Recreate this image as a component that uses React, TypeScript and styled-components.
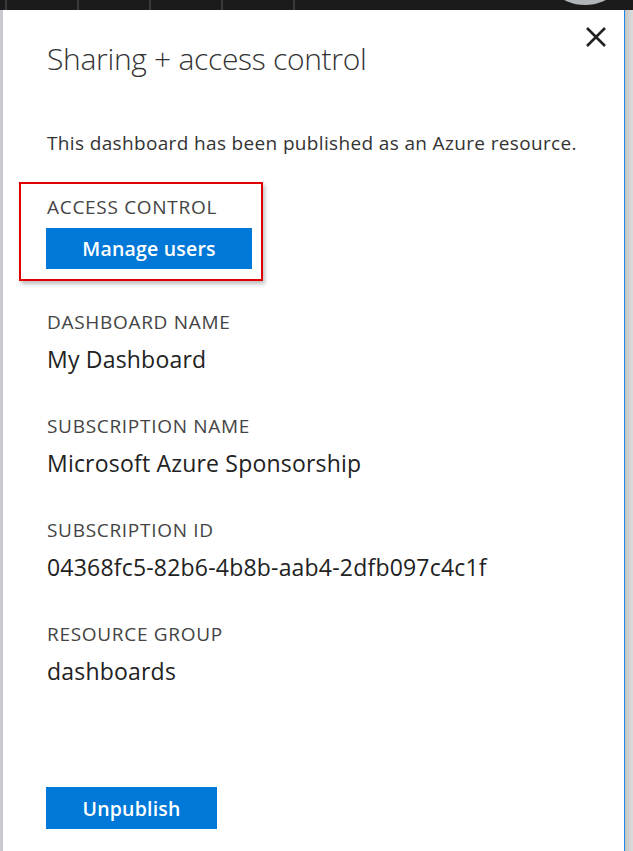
import * as React from 'react';
import styled, { createGlobalStyle } from 'styled-components';

const GlobalStyle = createGlobalStyle`
  html, body {
    margin: 0;
    padding: 0;
    background: #fff;
  }
  body {
    font-family: "Open Sans", "Noto Sans", sans-serif;
    color: #222;
  }
`;

const Page = styled.div`
  width: 633px;
  height: 851px;
  display: flex;
  flex-direction: column;
  overflow: hidden;
`;

const TopBar = styled.div`
  height: 10px;
  flex-shrink: 0;
  background: #1b1b1b;
  display: flex;
  align-items: flex-end;
  padding-left: 5px;
  overflow: hidden;
`;

const Tab = styled.div`
  width: 70px;
  height: 10px;
  flex-shrink: 0;
  border-left: 2px solid #3a3a3a;
`;

const Avatar = styled.div`
  width: 92px;
  height: 92px;
  border-radius: 50%;
  background: #b1b5ba;
  margin-left: auto;
  margin-right: 2px;
  margin-bottom: 5px;
  flex-shrink: 0;
`;

const Body = styled.div`
  flex: 1;
  display: flex;
`;

const LeftEdge = styled.div`
  width: 3px;
  background: #c9c9d1;
`;

const RightEdge = styled.div`
  width: 8px;
  background: linear-gradient(to right, #c4c4c4, #dcdcdc);
`;

const Panel = styled.div`
  flex: 1;
  background: #fff;
  border-right: 1px solid #1e88e5;
  padding: 0 0 0 44px;
  display: flex;
  flex-direction: column;
`;

const Header = styled.div`
  display: flex;
  justify-content: space-between;
  align-items: flex-start;
  padding-top: 31px;
`;

const Title = styled.h1`
  margin: 0;
  font-weight: 300;
  font-size: 30px;
  line-height: 36px;
  color: #333;
  letter-spacing: -0.3px;
`;

const CloseButton = styled.button`
  border: none;
  background: none;
  padding: 0;
  margin: -16px 16px 0 0;
  width: 24px;
  height: 24px;
  cursor: pointer;
`;

const Description = styled.p`
  margin: 54px 0 0;
  font-size: 19px;
  line-height: 24px;
  color: #333;
  letter-spacing: 0.35px;
`;

const Highlight = styled.div`
  margin: 27px 0 0 -28px;
  width: 214px;
  padding: 11px 0 10px 26px;
  border: 2px solid #e00000;
  box-shadow: 2px 3px 4px rgba(0, 0, 0, 0.25);
`;

const Field = styled.div<{ $gap?: number }>`
  margin-top: ${(p) => p.$gap ?? 0}px;
  display: flex;
  flex-direction: column;
`;

const Label = styled.div`
  font-size: 19px;
  line-height: 24px;
  text-transform: uppercase;
  color: #444;
  letter-spacing: 0.7px;
`;

const Value = styled.div`
  margin-top: 11px;
  font-size: 23px;
  line-height: 28px;
  color: #222;
  letter-spacing: 0.2px;
`;

const PrimaryButton = styled.button<{ $width: number; $height: number }>`
  width: ${(p) => p.$width}px;
  height: ${(p) => p.$height}px;
  border: none;
  background: #0078d7;
  color: #fff;
  font-family: "Open Sans", "Noto Sans", sans-serif;
  font-weight: 600;
  font-size: 19.5px;
  letter-spacing: 0.2px;
  padding: 0;
  margin-top: 9px;
  cursor: pointer;
`;

const Footer = styled.div`
  margin-top: auto;
  padding-bottom: 22px;
  margin-left: -1px;
`;

const fields = [
  { label: 'Dashboard name', value: 'My Dashboard' },
  { label: 'Subscription name', value: 'Microsoft Azure Sponsorship' },
  { label: 'Subscription ID', value: '04368fc5-82b6-4b8b-aab4-2dfb097c4c1f' },
  { label: 'Resource group', value: 'dashboards' },
];

export default function App() {
  return (
    <Page>
      <GlobalStyle />
      <TopBar>
        <Tab />
        <Tab />
        <Tab />
        <Tab />
        <Tab />
        <Avatar />
      </TopBar>
      <Body>
        <LeftEdge />
        <Panel>
          <Header>
            <Title>Sharing + access control</Title>
            <CloseButton aria-label="Close">
              <svg width="24" height="24" viewBox="0 0 24 24">
                <path d="M3 3 L21 21 M21 3 L3 21" stroke="#222" strokeWidth="2.6" fill="none" />
              </svg>
            </CloseButton>
          </Header>
          <Description>This dashboard has been published as an Azure resource.</Description>
          <Highlight>
            <Label>Access control</Label>
            <PrimaryButton $width={206} $height={41} style={{ marginLeft: -1 }}>
              Manage users
            </PrimaryButton>
          </Highlight>
          {fields.map((f, i) => (
            <Field key={f.label} $gap={i === 0 ? 29 : 41}>
              <Label>{f.label}</Label>
              <Value>{f.value}</Value>
            </Field>
          ))}
          <Footer>
            <PrimaryButton $width={171} $height={42}>Unpublish</PrimaryButton>
          </Footer>
        </Panel>
        <RightEdge />
      </Body>
    </Page>
  );
}
